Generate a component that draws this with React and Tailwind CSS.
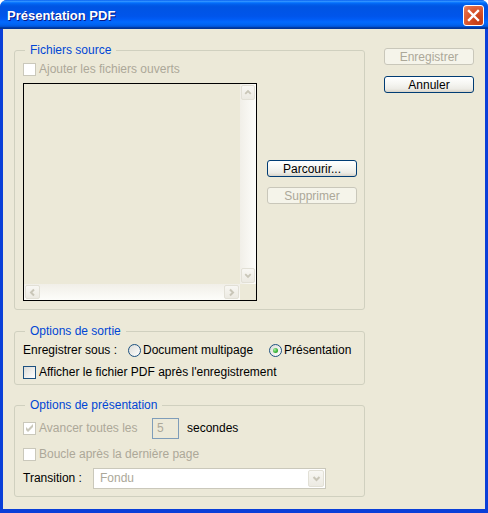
import React from "react";

function CheckBox({ checked, disabled }) {
  return (
    <span
      className={`flex h-[13px] w-[13px] shrink-0 items-center justify-center border ${
        disabled
          ? "border-[#CAC8BB] bg-white"
          : "border-[#1C5180] bg-[linear-gradient(135deg,#DCDCD7_0%,#FFFFFF_100%)]"
      }`}
    >
      {checked && (
        <svg width="11" height="11" viewBox="0 0 11 11">
          <polygon points="2,4 2,7 4,9 9,4 9,1 4,6" fill={disabled ? "#CAC8BB" : "#21A121"} />
        </svg>
      )}
    </span>
  );
}

function Radio({ checked }) {
  return (
    <span className="flex h-[13px] w-[13px] shrink-0 items-center justify-center rounded-full border border-[#1C5180] bg-[linear-gradient(135deg,#DCDCD7_0%,#FFFFFF_100%)]">
      {checked && (
        <span className="h-[5px] w-[5px] rounded-full bg-[radial-gradient(circle_at_35%_35%,#A8EEA2_0%,#3CB53C_55%,#1E8F1E_100%)]" />
      )}
    </span>
  );
}

const arrows = {
  up: "M3.5 8 L6.5 5 L9.5 8",
  down: "M3.5 5 L6.5 8 L9.5 5",
  left: "M8 3.5 L5 6.5 L8 9.5",
  right: "M5 3.5 L8 6.5 L5 9.5",
};

function SBtn({ dir, w = "w-[15px]", h = "h-[15px]" }) {
  return (
    <span
      className={`flex ${w} ${h} shrink-0 items-center justify-center rounded-[2px] border border-[#E2E0D6] bg-[linear-gradient(180deg,#F8F7F3_0%,#ECEAE2_100%)]`}
    >
      <svg width="13" height="13" viewBox="0 0 13 13">
        <path d={arrows[dir]} fill="none" stroke="#C9C6B8" strokeWidth="2" />
      </svg>
    </span>
  );
}

function XPButton({ children, disabled }) {
  return (
    <button
      className={`flex h-[17px] w-[90px] items-center justify-center rounded-[3px] border text-[12px] leading-none ${
        disabled
          ? "border-[#C9C7BA] bg-[#F5F4EA] text-[#ACA899]"
          : "border-[#003C74] bg-[linear-gradient(180deg,#FFFFFF_0%,#F6F6F2_45%,#ECEBE5_80%,#D8D3C8_100%)] text-black"
      }`}
    >
      {children}
    </button>
  );
}

function Group({ title, className = "", children }) {
  return (
    <fieldset className={`m-0 min-w-0 rounded-[3px] border border-[#D0D0BF] p-0 ${className}`}>
      <legend className="ml-[10px] px-[5px] leading-[13px] text-[#0046D5]">{title}</legend>
      {children}
    </fieldset>
  );
}

export default function App() {
  return (
    <div className="flex h-[513px] w-[488px] flex-col overflow-hidden rounded-t-[7px] bg-[#0A3FD8] text-[12px] leading-[13px] text-black [font-family:'Liberation_Sans',Arial,sans-serif]">
      {/* Title bar */}
      <div className="flex h-[29px] shrink-0 items-start justify-between bg-[linear-gradient(180deg,#0058EE_0%,#3593FF_4%,#288EFF_6%,#127DFF_8%,#036FFC_10%,#0262EE_14%,#0057E5_20%,#0054E3_24%,#0055EB_56%,#005BF5_66%,#026AFE_76%,#0062EF_86%,#0052D6_92%,#0040AB_94%,#003092_100%)] pl-[7px] pr-[4px]">
        <span className="pt-[8px] text-[13px] font-bold leading-[15px] text-white [text-shadow:1px_1px_0_#0A1883]">
          Présentation PDF
        </span>
        <span className="mt-[5px] flex h-[21px] w-[21px] items-center justify-center rounded-[3px] border border-white bg-[radial-gradient(circle_at_75%_80%,#C33A12_0%,#D8532A_50%,#E4714E_85%,#F09A80_100%)]">
          <svg width="19" height="19" viewBox="0 0 19 19">
            <path d="M5 5 L14 14 M14 5 L5 14" stroke="#FFFFFF" strokeWidth="2.4" strokeLinecap="square" />
          </svg>
        </span>
      </div>

      {/* Client area */}
      <div className="mx-[3px] mb-[4px] flex flex-1 bg-[#ECE9D8]">
        {/* Left column */}
        <div className="ml-[11px] flex w-[351px] flex-col">
          <Group title="Fichiers source" className="mt-[15px]">
            <div className="flex flex-col pb-[8px] pl-[8px]">
              <label className="mt-[6px] flex h-[13px] items-center gap-[3px] text-[#ACA899]">
                <CheckBox disabled />
                <span>Ajouter les fichiers ouverts</span>
              </label>
              <div className="mt-[7px] flex">
                <div className="grid h-[218px] w-[234px] grid-cols-[1fr_16px] grid-rows-[1fr_16px] border border-black bg-[#ECE9D8]">
                  <div />
                  <div className="flex flex-col items-center justify-between bg-[linear-gradient(90deg,#F1EFE8_0%,#FDFDFA_100%)] py-[1px]">
                    <SBtn dir="up" w="w-[14px]" />
                    <SBtn dir="down" w="w-[14px]" />
                  </div>
                  <div className="flex items-center justify-between bg-[linear-gradient(180deg,#F1EFE8_0%,#FDFDFA_100%)] px-[1px]">
                    <SBtn dir="left" h="h-[14px]" />
                    <SBtn dir="right" h="h-[14px]" />
                  </div>
                  <div />
                </div>
                <div className="ml-[10px] mt-[77px] flex flex-col gap-[10px]">
                  <XPButton>Parcourir...</XPButton>
                  <XPButton disabled>Supprimer</XPButton>
                </div>
              </div>
            </div>
          </Group>

          <Group title="Options de sortie" className="mt-[15px]">
            <div className="flex flex-col pb-[5px] pl-[8px]">
              <div className="mt-[6px] flex h-[13px] items-center">
                <span className="w-[105px]">Enregistrer sous :</span>
                <label className="flex w-[141px] items-center gap-[2px]">
                  <Radio />
                  <span>Document multipage</span>
                </label>
                <label className="flex items-center gap-[2px]">
                  <Radio checked />
                  <span>Présentation</span>
                </label>
              </div>
              <label className="mt-[9px] flex h-[13px] items-center gap-[3px]">
                <CheckBox />
                <span>Afficher le fichier PDF après l'enregistrement</span>
              </label>
            </div>
          </Group>

          <Group title="Options de présentation" className="mt-[14px]">
            <div className="flex flex-col pb-[7px] pl-[8px]">
              <div className="mt-[6px] flex h-[21px] items-center">
                <label className="flex w-[129px] items-center gap-[3px] text-[#ACA899]">
                  <CheckBox checked disabled />
                  <span>Avancer toutes les</span>
                </label>
                <span className="flex h-[21px] w-[27px] items-center border border-[#7F9DB9] bg-[#ECE9D8] pl-[4px] text-[#ACA899]">
                  5
                </span>
                <span className="ml-[8px]">secondes</span>
              </div>
              <label className="mt-[9px] flex h-[13px] items-center gap-[3px] text-[#ACA899]">
                <CheckBox disabled />
                <span>Boucle après la dernière page</span>
              </label>
              <div className="mt-[7px] flex h-[21px] items-center">
                <span className="w-[70px]">Transition :</span>
                <div className="flex h-[21px] w-[233px] items-center border border-[#CAC8BB] bg-white p-[1px]">
                  <span className="flex-1 pl-[5px] text-[#ACA899]">Fondu</span>
                  <SBtn dir="down" w="w-[16px]" h="h-[17px]" />
                </div>
              </div>
            </div>
          </Group>
        </div>

        {/* Right column */}
        <div className="ml-auto mr-[11px] flex flex-col gap-[11px] pt-[19px]">
          <XPButton disabled>Enregistrer</XPButton>
          <XPButton>Annuler</XPButton>
        </div>
      </div>
    </div>
  );
}
